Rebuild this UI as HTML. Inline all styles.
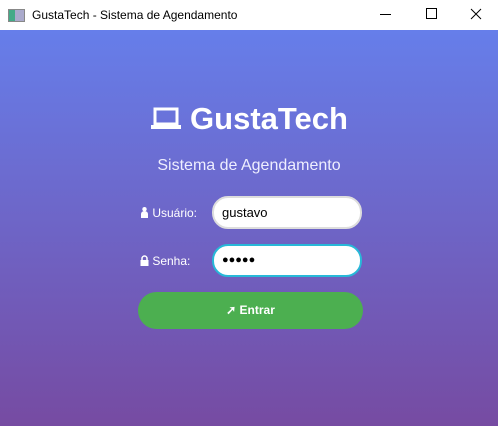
<!DOCTYPE html><html><head><style>
body{margin:0;width:498px;height:426px;overflow:hidden;font-family:"Liberation Sans",Arial,Helvetica,sans-serif;}
.tb{height:30px;background:#fff;position:relative;font-size:12px;color:#000}
.tb .t{position:absolute;left:32px;top:8px}
.ic{position:absolute;left:8px;top:9px;width:15px;height:11px;border:1px solid #888;background:linear-gradient(90deg,#4a8 0 40%,#aac 40%)}
.main{position:absolute;top:30px;left:0;width:498px;height:396px;background:linear-gradient(180deg,#667eea,#764ba2)}
.h{position:absolute;top:71px;left:0;width:498px;text-align:center;color:#fff;font-weight:bold;font-size:31px}
.s{position:absolute;top:127px;left:0;width:498px;text-align:center;color:#eef;font-size:16px}
.l{position:absolute;left:140px;color:#fff;font-size:12px}
.in{position:absolute;left:212px;height:29px;background:#fff;border:2px solid #ddd;border-radius:16px;font-size:13px;line-height:29px;padding-left:8px;width:138px}
.btn{position:absolute;left:138px;top:262px;width:225px;height:37px;border-radius:19px;background:#4caf50;color:#fff;font-weight:bold;font-size:12px;text-align:center;line-height:37px}
</style></head><body>
<div class="tb"><div class="ic"></div><span class="t">GustaTech - Sistema de Agendamento</span>
<svg width="498" height="30" style="position:absolute;left:0;top:0"><path d="M380 14.5h11" stroke="#000" stroke-width="1"/><rect x="426.5" y="8.5" width="10" height="10" fill="none" stroke="#000"/><path d="M471 9l10 10M481 9l-10 10" stroke="#000"/></svg></div>
<div class="main">
<div class="h"><svg width="32" height="24" viewBox="0 0 32 24" style="vertical-align:-2px;margin-right:8px"><rect x="5" y="2" width="22" height="15" fill="none" stroke="#fff" stroke-width="3"/><rect x="1" y="18" width="30" height="4" fill="#fff"/></svg>GustaTech</div>
<div class="s">Sistema de Agendamento</div>
<div class="l" style="top:176px"><svg width="9" height="11" viewBox="0 0 9 11" style="vertical-align:-1px"><circle cx="4.5" cy="2.2" r="2.2" fill="#fff"/><path d="M1 11V7a3.5 3 0 0 1 7 0v4z" fill="#fff"/></svg> Usuário:</div>
<div class="in" style="top:166px">gustavo</div>
<div class="l" style="top:224px"><svg width="9" height="11" viewBox="0 0 9 11" style="vertical-align:-1px"><path d="M2 5V3.5a2.5 2.5 0 0 1 5 0V5" fill="none" stroke="#fff" stroke-width="1.5"/><rect x="0.5" y="5" width="8" height="6" fill="#fff"/></svg> Senha:</div>
<div class="in" style="top:214px;border-color:#28b8d8;font-size:11px;letter-spacing:0px">●●●●●</div>
<div class="btn">&#10138; Entrar</div>
</div>
</body></html>
